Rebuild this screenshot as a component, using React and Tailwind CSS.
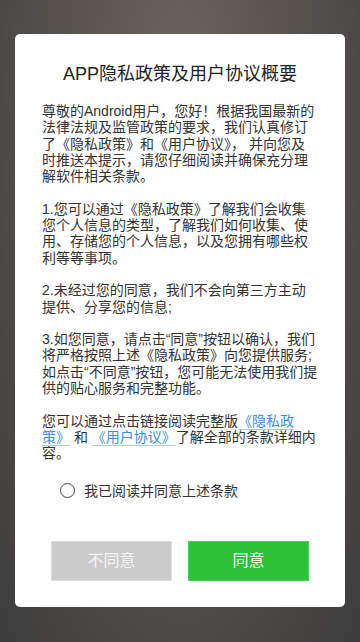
import { useState } from 'react'

const FONT = { fontFamily: '"Liberation Sans", "Noto Sans CJK SC", sans-serif' }

function Link({ children }) {
  return (
    <span className="text-[#3d8ddc] underline decoration-[#a8cbf0] underline-offset-[3px]">
      {children}
    </span>
  )
}

export default function App() {
  const [checked, setChecked] = useState(false)

  return (
    <div
      className="w-full h-[642px] px-[15px] pt-[34px] bg-[radial-gradient(ellipse_at_50%_20%,#6b6661_0%,#58534f_45%,#3d3d3d_100%)]"
      style={FONT}
    >
      <div className="bg-white rounded-[5px] h-[573px] flex flex-col">
        {/* Title */}
        <h1 className="pt-[28px] text-center text-[18px] leading-6 text-[#222]">
          APP隐私政策及用户协议概要
        </h1>

        {/* Body */}
        <div className="mt-[17px] px-[27px] text-[14px] leading-[16.3px] text-[#333]">
          <p>
            尊敬的Android用户，您好！根据我国最新的法律法规及监管政策的要求，我们认真修订了《隐私政策》和《用户协议》， 并向您及时推送本提示，请您仔细阅读并确保充分理解软件相关条款。
          </p>
          <p className="mt-[16.3px]">
            1.您可以通过《隐私政策》了解我们会收集您个人信息的类型，了解我们如何收集、使用、存储您的个人信息，以及您拥有哪些权利等等事项。
          </p>
          <p className="mt-[16.3px]">
            2.未经过您的同意，我们不会向第三方主动提供、分享您的信息;
          </p>
          <p className="mt-[16.3px]">
            3.如您同意，请点击“同意”按钮以确认，我们将严格按照上述《隐私政策》向您提供服务;如点击“不同意”按钮，您可能无法使用我们提供的贴心服务和完整功能。
          </p>
          <p className="mt-[16.3px]">
            您可以通过点击链接阅读完整版<Link>《隐私政策》</Link> 和 <Link>《用户协议》</Link>了解全部的条款详细内容。
          </p>
        </div>

        {/* Agree checkbox */}
        <button
          onClick={() => setChecked(!checked)}
          className="mt-[19px] ml-[45px] flex items-center gap-[9px] text-[14px] leading-5 text-[#333]"
        >
          <span className="w-[15px] h-[15px] rounded-full border-[1.5px] border-[#444] flex items-center justify-center">
            {checked && <span className="w-[7px] h-[7px] rounded-full bg-[#2dc13a]" />}
          </span>
          我已阅读并同意上述条款
        </button>

        {/* Actions */}
        <div className="mt-auto mb-[26px] flex justify-center gap-4">
          <button className="w-[121px] h-10 bg-[#cbcbcb] border border-[#dedede] text-[16px] text-[#f4f4f4]">
            不同意
          </button>
          <button className="w-[121px] h-10 bg-[#2dc13a] border border-[#4cd158] text-[16px] text-white">
            同意
          </button>
        </div>
      </div>
    </div>
  )
}
